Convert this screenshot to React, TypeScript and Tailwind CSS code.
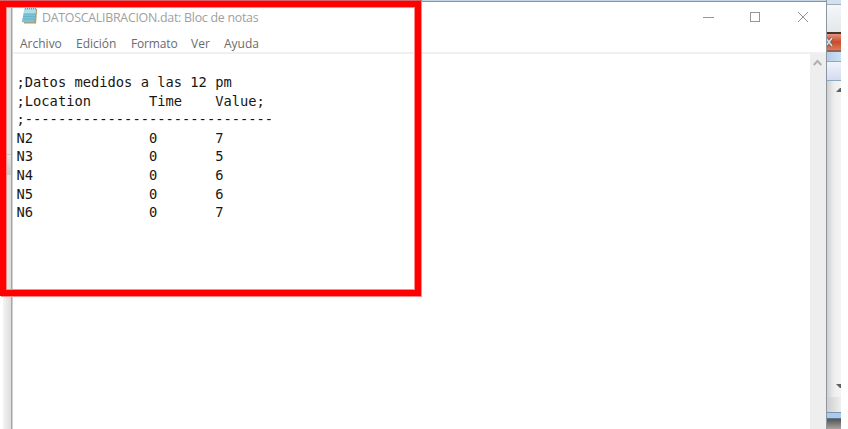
const rows: [string, string, string][] = [
  ["N2", "0", "7"],
  ["N3", "0", "5"],
  ["N4", "0", "6"],
  ["N5", "0", "6"],
  ["N6", "0", "7"],
];

const lines = [
  ";Datos medidos a las 12 pm",
  ";Location".padEnd(16) + "Time".padEnd(8) + "Value;",
  ";" + "-".repeat(30),
  ...rows.map(([node, time, value]) => node.padEnd(16) + time.padEnd(8) + value),
];

function NotepadIcon() {
  return (
    <svg width="17" height="18" viewBox="0 0 17 18" className="block">
      <path d="M4 2H16.2L15 16.5H3Z" fill="#b39a6c" />
      <path d="M3.6 1.5H15.2L13.2 15.3H0.8Z" fill="#7cc3d6" />
      <path d="M3.6 1.5H15.2L14.5 6.5H2.7Z" fill="#b0dfea" />
      <path d="M2.6 7H14.2M2.2 9.5H13.8M1.8 12H13.5" stroke="#58a9c0" strokeWidth="0.6" />
      <path d="M4.5 0.3V2.4M6.5 0.3V2.4M8.5 0.3V2.4M10.5 0.3V2.4M12.5 0.3V2.4M14.5 0.3V2.4" stroke="#667d86" strokeWidth="0.8" />
    </svg>
  );
}

function LeftEdge() {
  return (
    <div className="flex w-[13px] shrink-0 pl-[3px]">
      <div className="flex w-2 flex-col bg-linear-to-r from-[#f4f4f4] to-[#dedede]">
        <div className="mt-[154px] h-[21px] border-t border-b border-[#c8c8c8] bg-linear-to-b from-[#e6e6e6] to-[#c9c9c9]" />
      </div>
      <div className="w-px bg-[#a5a5a5]" />
      <div className="w-px bg-[#d0d0d0]" />
    </div>
  );
}

function RightEdge() {
  return (
    <div className="flex w-[14px] shrink-0 flex-col overflow-hidden">
      <div className="h-1 bg-[#d3e0f0]" />
      <div className="h-[28px] border-t border-[#9fadba] bg-linear-to-b from-[#f5f7f8] to-[#e3e8ea]" />
      <div className="flex h-5 items-center border-y-2 border-t-[#43352f] border-b-[#9a6050] bg-linear-to-b from-[#e8917a] via-[#cb4a2b] to-[#df795a]">
        <svg width="8" height="10" viewBox="0 0 8 10">
          <path d="M-1 1L5 9M5 1L-1 9" stroke="#775c58" strokeWidth="3.4" />
          <path d="M-1 1L5 9M5 1L-1 9" stroke="#e2dcdc" strokeWidth="1.6" />
        </svg>
      </div>
      <div className="h-[9px] bg-linear-to-r from-[#b4cce7] to-[#cbe1f8]" />
      <div className="h-5 border-y border-[#8daabd] bg-linear-to-b from-[#f1f3fb] to-[#d5dcef]" />
      <div className="flex h-[316px] flex-col items-end justify-between bg-linear-to-r from-[#cfcfcf] via-[#eeeeee] to-[#f4f4f4] pt-[7px] pb-[9px]">
        <svg width="5" height="4" viewBox="0 0 5 4"><path d="M0 4L4 0H5V4Z" fill="#606060" /></svg>
        <svg width="5" height="4" viewBox="0 0 5 4"><path d="M0 0H5V4H4Z" fill="#606060" /></svg>
      </div>
      <div className="h-[15px] bg-linear-to-r from-[#cecece] to-[#efefef]" />
      <div className="h-[7px] border-t border-b border-t-[#7797b0] border-b-[#60768c] bg-[#a9c9ed]" />
      <div className="grow bg-linear-to-b from-[#555555] to-[#aaa5a3]" />
    </div>
  );
}

export default function App() {
  return (
    <div className="relative flex h-[429px] w-[848px] overflow-hidden bg-white">
      <LeftEdge />
      <main className="flex w-[813px] shrink-0 flex-col bg-white font-['Open_Sans','Noto_Sans',sans-serif]">
        <div className="h-0.5 shrink-0 border-b border-[#8496a6] bg-[#c5d4e5]" />
        <header className="flex h-[31px] shrink-0 items-center pl-2">
          <div className="pb-1"><NotepadIcon /></div>
          <h1 className="ml-1 w-[220px] pt-px text-[12.4px] tracking-[-0.27px] whitespace-nowrap text-[#a0a0a0]">
            DATOSCALIBRACION.dat: Bloc de notas
          </h1>
          <svg width="108" height="12" viewBox="0 0 108 12" className="mr-[15px] mb-px ml-auto" fill="none" stroke="#969696">
            <path d="M0 6.5H11" />
            <rect x="47.5" y="1.5" width="9" height="9" />
            <path d="M95 1L105 11M105 1L95 11" />
          </svg>
        </header>
        <nav className="flex h-[19px] shrink-0 items-center pt-[3px] pl-[7px] text-[12px] leading-4 whitespace-nowrap text-[#6b6b6b]">
          <span className="w-[56px]">Archivo</span>
          <span className="w-[55px]">Edición</span>
          <span className="w-[60px] tracking-[-0.15px]">Formato</span>
          <span className="w-[33px]">Ver</span>
          <span>Ayuda</span>
        </nav>
        <div className="flex min-h-0 grow border-t-2 border-[#f0f0f0]">
          <pre className="grow pt-[19px] pl-[3.5px] font-['DejaVu_Sans_Mono',monospace] text-[13.75px] leading-[18.6px] text-[#161616]">
            {lines.join("\n")}
          </pre>
          <div className="w-[16px] shrink-0 bg-[#eeeeee] pt-[5px] pl-[3px]">
            <svg width="9" height="8" viewBox="0 0 9 8" fill="none" stroke="#b0b0b0" strokeWidth="2">
              <path d="M0.7 6L4.5 2L8.3 6" />
            </svg>
          </div>
        </div>
      </main>
      <div className="w-px shrink-0 bg-[#8d969e]" />
      <RightEdge />
      <div className="absolute top-0 left-0 h-[296px] w-[421px] border-[6px] border-t-[7px] border-[#ff0000] shadow-[1px_1px_0_#ff8a8a,inset_1px_1px_0_#ff8a8a,inset_-1px_-1px_0_#ff8a8a]" />
      <div className="absolute top-0 left-0 h-px w-[422px] bg-[#da6269]" />
    </div>
  );
}
